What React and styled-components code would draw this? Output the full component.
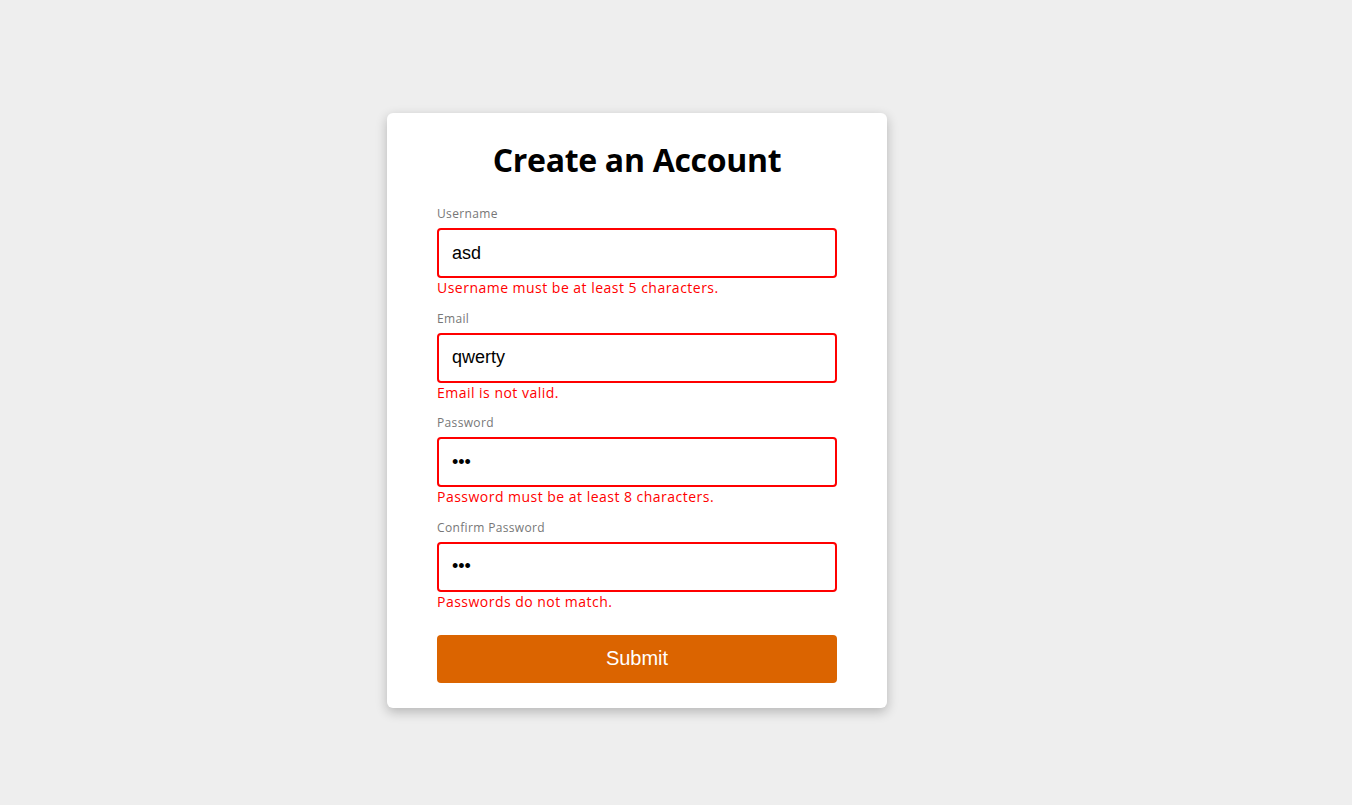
import React, {useState} from "react";
import styled, {createGlobalStyle} from "styled-components";

const GlobalStyle = createGlobalStyle`
    html, body {
        margin: 0;
        padding: 0;
        background: #eeeeee;
        font-family: "Open Sans", "Liberation Sans", sans-serif;
    }
`;

const Page = styled.div`
    min-height: 805px;
    padding: 113px 0 0 387px;
    box-sizing: border-box;
`;

const Card = styled.form`
    width: 500px;
    box-sizing: border-box;
    padding: 26px 50px 25px;
    background: #ffffff;
    border-radius: 6px;
    box-shadow: 0 4px 12px rgba(0, 0, 0, 0.24);
`;

const Title = styled.h1`
    margin: 0 0 26px;
    text-align: center;
    font-size: 32px;
    font-weight: 700;
    line-height: 41px;
    letter-spacing: -0.3px;
    color: #000;
`;

const Field = styled.div`
    display: flex;
    flex-direction: column;
    margin-bottom: 13.67px;
`;

const Label = styled.label`
    font-size: 12px;
    line-height: 16px;
    letter-spacing: 0.35px;
    color: #777777;
    margin-bottom: 6px;
`;

const Input = styled.input`
    height: 50px;
    box-sizing: border-box;
    padding: 0 13px;
    border: 2px solid ${props => props.$invalid ? "#ff0000" : "#cccccc"};
    border-radius: 4px;
    font-family: "Liberation Sans", Arial, sans-serif;
    font-size: 18px;
    color: #000;
    outline: none;
`;

const Error = styled.span`
    font-size: 14px;
    line-height: 19px;
    letter-spacing: 0.48px;
    color: #ff0000;
`;

const Submit = styled.button`
    display: block;
    width: 100%;
    height: 48px;
    margin-top: 24px;
    border: none;
    border-radius: 4px;
    background: #db6400;
    color: #ffffff;
    font-family: "Liberation Sans", Arial, sans-serif;
    font-size: 20px;
    cursor: pointer;
`;

const fields = [
    {name: "username", label: "Username", type: "text", value: "asd", error: "Username must be at least 5 characters."},
    {name: "email", label: "Email", type: "text", value: "qwerty", error: "Email is not valid."},
    {name: "password", label: "Password", type: "password", value: "123", error: "Password must be at least 8 characters."},
    {name: "confirm", label: "Confirm Password", type: "password", value: "123", error: "Passwords do not match."},
];

export default function App() {
    const [values, setValues] = useState(
        Object.fromEntries(fields.map(f => [f.name, f.value]))
    );

    return (
        <>
            <GlobalStyle/>
            <Page>
                <Card onSubmit={e => e.preventDefault()}>
                    <Title>Create an Account</Title>
                    {fields.map(f =>
                        <Field key={f.name}>
                            <Label htmlFor={f.name}>{f.label}</Label>
                            <Input
                                id={f.name}
                                type={f.type}
                                $invalid={!!f.error}
                                value={values[f.name]}
                                onChange={e => setValues({...values, [f.name]: e.target.value})}/>
                            {f.error && <Error>{f.error}</Error>}
                        </Field>
                    )}
                    <Submit type="submit">Submit</Submit>
                </Card>
            </Page>
        </>
    );
}
